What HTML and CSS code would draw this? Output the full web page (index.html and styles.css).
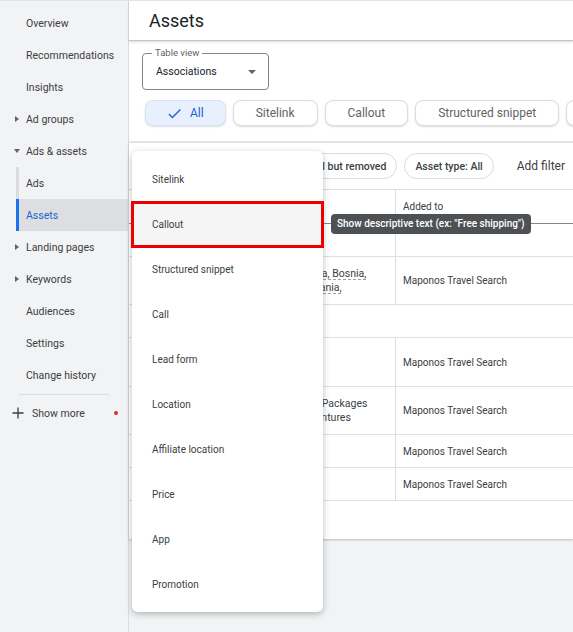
FILE: index.html
```html
<!DOCTYPE html>
<html lang="en">
<head>
  <meta charset="UTF-8">
  <meta name="viewport" content="width=device-width, initial-scale=1.0">
  <title>Assets</title>
  <link rel="stylesheet" href="styles.css">
</head>
<body>
  <div class="app">
    <aside class="sidebar">
      <nav class="side-nav">
        <a class="side-item" href="#">Overview</a>
        <a class="side-item" href="#">Recommendations</a>
        <a class="side-item" href="#">Insights</a>
        <a class="side-item" href="#"><span class="caret caret-right"></span>Ad groups</a>
        <a class="side-item" href="#"><span class="caret caret-down"></span>Ads &amp; assets</a>
        <div class="sub-group">
          <a class="side-item sub" href="#">Ads</a>
          <a class="side-item sub active" href="#">Assets</a>
        </div>
        <a class="side-item" href="#"><span class="caret caret-right"></span>Landing pages</a>
        <a class="side-item" href="#"><span class="caret caret-right"></span>Keywords</a>
        <a class="side-item" href="#">Audiences</a>
        <a class="side-item" href="#">Settings</a>
        <a class="side-item" href="#">Change history</a>
      </nav>
      <div class="side-sep"></div>
      <a class="show-more" href="#">
        <svg width="12" height="12" viewBox="0 0 12 12"><path d="M6 0.5v11M0.5 6h11" stroke="#3c4043" stroke-width="1.3" fill="none"/></svg>
        Show more
        <span class="dot"></span>
      </a>
    </aside>

    <main class="main">
      <header class="page-head">
        <h1>Assets</h1>
      </header>

      <section class="toolbar">
        <div class="select">
          <span class="select-label">Table view</span>
          <span>Associations</span>
          <span class="select-arrow"></span>
        </div>
        <div class="type-chips">
          <button class="chip chip-on">
            <svg width="17" height="17" viewBox="0 0 24 24"><path d="M9 16.2L4.8 12l-1.4 1.4L9 19 21 7l-1.4-1.4z" fill="#1967d2"/></svg>
            All
          </button>
          <button class="chip">Sitelink</button>
          <button class="chip">Callout</button>
          <button class="chip">Structured snippet</button>
          <button class="chip chip-more"></button>
        </div>
      </section>

      <section class="table-card">
        <div class="filter-row">
          <span class="filter-chip">Ad status: All but removed</span>
          <span class="filter-chip">Asset type: All</span>
          <span class="add-filter">Add filter</span>
        </div>

        <div class="row head">
          <div class="cell"></div>
          <div class="cell">Asset</div>
          <div class="cell added">Added to</div>
        </div>
        <div class="row short">
          <div class="cell"></div>
          <div class="cell"></div>
          <div class="cell added"></div>
        </div>
        <div class="row tall">
          <div class="cell"></div>
          <div class="cell asset"><span class="dashed">Serbia, Bosnia,</span><span class="dashed">Romania,</span></div>
          <div class="cell added">Maponos Travel Search</div>
        </div>
        <div class="row short full"><div class="cell"></div></div>
        <div class="row tall">
          <div class="cell"></div>
          <div class="cell"></div>
          <div class="cell added">Maponos Travel Search</div>
        </div>
        <div class="row tall">
          <div class="cell"></div>
          <div class="cell asset"><span>Tour Packages</span><span>Adventures</span></div>
          <div class="cell added">Maponos Travel Search</div>
        </div>
        <div class="row short">
          <div class="cell"></div>
          <div class="cell"></div>
          <div class="cell added">Maponos Travel Search</div>
        </div>
        <div class="row short">
          <div class="cell"></div>
          <div class="cell"></div>
          <div class="cell added">Maponos Travel Search</div>
        </div>
        <div class="row foot full"><div class="cell"></div></div>
      </section>

      <div class="menu">
        <div class="menu-item">Sitelink</div>
        <div class="menu-item marked">Callout</div>
        <div class="menu-item">Structured snippet</div>
        <div class="menu-item">Call</div>
        <div class="menu-item">Lead form</div>
        <div class="menu-item">Location</div>
        <div class="menu-item">Affiliate location</div>
        <div class="menu-item">Price</div>
        <div class="menu-item">App</div>
        <div class="menu-item">Promotion</div>
      </div>

      <div class="tooltip">Show descriptive text (ex: "Free shipping")</div>
    </main>
  </div>
</body>
</html>
```

FILE: styles.css
```css
body { margin: 0; font-family: Roboto, "Liberation Sans", sans-serif; color: #3c4043; background: #f1f3f4; }
.app { display: flex; height: 631px; border-top: 1px solid #e3e3e3; overflow: hidden; }

/* sidebar */
.sidebar { width: 128px; flex-shrink: 0; background: #f1f3f4; border-right: 1px solid #dadce0; padding-top: 6px; }
.side-item { display: flex; align-items: center; height: 32px; padding-left: 26px; font-size: 10.5px; color: #3c4043; text-decoration: none; position: relative; }
.caret { position: absolute; left: 15px; top: 13px; width: 0; height: 0; }
.caret-right { border-top: 3px solid transparent; border-bottom: 3px solid transparent; border-left: 4px solid #5f6368; }
.caret-down { left: 14px; top: 14px; border-left: 3px solid transparent; border-right: 3px solid transparent; border-top: 4px solid #5f6368; }
.sub-group { margin-left: 16px; }
.side-item.sub { padding-left: 7px; border-left: 3px solid #dadce0; }
.side-item.sub.active { border-left-color: #1a73e8; background: #dcdee1; color: #1967d2; }
.side-sep { height: 1px; background: #dadce0; margin: 3px 19px 0 19px; }
.show-more { display: flex; align-items: center; gap: 8px; height: 36px; padding-left: 12px; font-size: 10.5px; color: #3c4043; text-decoration: none; position: relative; }
.show-more .dot { position: absolute; left: 114px; top: 16px; width: 4px; height: 4px; border-radius: 50%; background: #d93025; }

/* main */
.main { flex: 1; min-width: 0; position: relative; display: flex; flex-direction: column; background: #f1f3f4; }
.page-head { height: 39px; background: #fff; border-bottom: 1px solid #c6c6c6; box-shadow: 0 1px 2px rgba(60, 64, 67, .2); display: flex; align-items: center; padding-left: 20px; position: relative; z-index: 1; }
.page-head h1 { margin: 0; font-size: 18px; font-weight: 400; color: #202124; }

.toolbar { background: #fff; padding: 12px 0 15px 13px; border-bottom: 2px solid #e3e5e8; overflow: hidden; }
.select { position: relative; width: 127px; height: 37px; box-sizing: border-box; border: 1px solid #80868b; border-radius: 4px; display: flex; align-items: center; justify-content: space-between; padding: 0 12px 0 13px; font-size: 10.5px; color: #202124; }
.select-label { position: absolute; top: -7px; left: 9px; background: #fff; padding: 0 3px; font-size: 9.5px; line-height: 12px; color: #5f6368; }
.select-arrow { width: 0; height: 0; border-left: 4px solid transparent; border-right: 4px solid transparent; border-top: 4px solid #5f6368; }

.type-chips { display: flex; gap: 7px; margin: 10px 0 0 3px; }
.chip { flex-shrink: 0; height: 26px; box-sizing: border-box; display: flex; align-items: center; gap: 7px; padding: 0 22px; border: 1px solid #dadce0; border-radius: 8px; background: #fff; box-shadow: 0 1px 2px rgba(60, 64, 67, .18); font-family: inherit; font-size: 12px; font-weight: 400; color: #5f6368; white-space: nowrap; }
.chip-on { background: #e8f0fe; border-color: #d6e4fb; color: #1967d2; padding: 0 21px 0 20px; }
.chip-more { width: 60px; }

/* table */
.table-card { background: #fff; box-shadow: 0 1px 2px rgba(60, 64, 67, .3); }
.filter-row { height: 46px; display: flex; align-items: center; justify-content: flex-end; gap: 7px; padding-right: 8px; border-bottom: 1px solid #dadce0; white-space: nowrap; }
.filter-chip { height: 26px; box-sizing: border-box; display: flex; align-items: center; padding: 0 10px; border: 1px solid #dadce0; border-radius: 13px; font-size: 10.5px; font-weight: 500; color: #3c4043; }
.add-filter { margin-left: 16px; font-size: 12px; color: #3c4043; }

.row { display: grid; grid-template-columns: 160px 106px 1fr; border-bottom: 1px solid #e0e0e0; font-size: 10px; color: #3c4043; }
.row.head { height: 33px; border-bottom-color: #80868b; }
.row.short { height: 32px; }
.row.tall { height: 47px; }
.row.tall:nth-of-type(6) { height: 48px; }
.row.full { grid-template-columns: 1fr; }
.row.foot { height: 38px; border-bottom: none; }
.cell { display: flex; align-items: center; padding-left: 8px; }
.cell.added { border-left: 1px solid #dadce0; padding-left: 7px; }
.cell.asset { flex-direction: column; align-items: flex-start; justify-content: center; padding-left: 9px; line-height: 14px; white-space: nowrap; font-size: 10.5px; }
.dashed { text-decoration: underline dashed #9aa0a6; text-underline-offset: 2px; }

/* dropdown menu */
.menu { position: absolute; left: 3px; top: 150px; width: 191px; background: #fff; border-radius: 6px; box-shadow: 0 2px 6px rgba(60, 64, 67, .35); padding: 6px 0 5px; z-index: 2; }
.menu-item { height: 45px; display: flex; align-items: center; padding-left: 20px; font-size: 10px; color: #3c4043; }
.menu-item.marked { background: #f5f5f5; outline: 3px solid #ee0000; outline-offset: -2px; }

.tooltip { position: absolute; left: 202px; top: 213px; height: 20px; line-height: 20px; padding: 0 6px; border-radius: 4px; background: #4e5154; color: #fff; font-size: 10px; font-weight: 500; white-space: nowrap; z-index: 3; }
```
